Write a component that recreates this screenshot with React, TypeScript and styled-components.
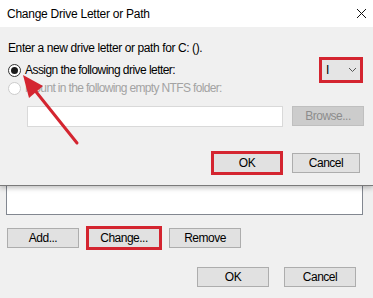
import React from "react";
import styled, { createGlobalStyle, css } from "styled-components";

const RED = "#d42530";

const GlobalStyle = createGlobalStyle`
  html, body {
    margin: 0;
    padding: 0;
    background: #f0f0f0;
  }
  body {
    font-family: "Liberation Sans", Arial, sans-serif;
    font-size: 12px;
    color: #000;
  }
`;

const Page = styled.div`
  position: relative;
  width: 373px;
  height: 298px;
  overflow: hidden;
  background: #f0f0f0;
`;

const Dialog = styled.div`
  position: relative;
  z-index: 1;
  background: #f0f0f0;
  border-bottom: 1px solid #7a7a7a;
  box-shadow: 0 2px 5px rgba(0, 0, 0, 0.25);
`;

const TitleBar = styled.div`
  height: 27px;
  background: #fff;
  display: flex;
  align-items: center;
  justify-content: space-between;
  padding: 0 6px 0 7px;
`;

const Title = styled.span`
  font-size: 12px;
  letter-spacing: -0.25px;
`;

const DialogBody = styled.div`
  display: flex;
  flex-direction: column;
  padding: 13px 0 12px 8px;
`;

const Prompt = styled.div`
  line-height: 16px;
  letter-spacing: -0.4px;
`;

const OptionRow = styled.div`
  display: flex;
  align-items: center;
  justify-content: space-between;
  height: 16px;
  margin-top: 6px;
  padding-right: 12px;
`;

const RadioLabel = styled.label<{ $disabled?: boolean }>`
  display: flex;
  align-items: center;
  gap: 4px;
  height: 16px;
  letter-spacing: ${(p) => (p.$disabled ? "-0.65px" : "-0.55px")};
  color: ${(p) => (p.$disabled ? "#a3a3a3" : "#000")};
  margin-top: ${(p) => (p.$disabled ? "2px" : "0")};
`;

const Radio = styled.span<{ $checked?: boolean; $disabled?: boolean }>`
  width: 11px;
  height: 11px;
  border-radius: 50%;
  background: #fff;
  border: 1px solid ${(p) => (p.$disabled ? "#cccccc" : "#333")};
  display: flex;
  align-items: center;
  justify-content: center;
  flex-shrink: 0;
  &::after {
    content: "";
    display: ${(p) => (p.$checked ? "block" : "none")};
    width: 7px;
    height: 7px;
    border-radius: 50%;
    background: #1a1a1a;
  }
`;

const highlight = css`
  outline: 3px solid ${RED};
  outline-offset: -1px;
`;

const Combo = styled.div<{ $highlighted?: boolean }>`
  width: 40px;
  height: 22px;
  margin: -3px 0;
  box-sizing: border-box;
  background: #e5e5e5;
  border: 1px solid #adadad;
  display: flex;
  align-items: center;
  justify-content: space-between;
  padding: 0 3px 0 4px;
  ${(p) => p.$highlighted && highlight}
`;

const FolderRow = styled.div`
  display: flex;
  align-items: flex-start;
  gap: 9px;
  margin-top: 10px;
  padding-left: 19px;
`;

const PathInput = styled.div`
  width: 256px;
  height: 21px;
  box-sizing: border-box;
  background: #fff;
  border: 1px solid #d9d9d9;
`;

const Button = styled.button<{ $highlighted?: boolean; $width?: number }>`
  width: ${(p) => p.$width ?? 72}px;
  height: 20px;
  box-sizing: border-box;
  padding: 0;
  font-family: inherit;
  font-size: 12px;
  letter-spacing: -0.5px;
  color: #000;
  background: #e1e1e1;
  border: 1px solid #adadad;
  border-radius: 0;
  flex-shrink: 0;
  &:disabled {
    background: #cccccc;
    border-color: #bfbfbf;
    color: #8c8c8c;
  }
  ${(p) => p.$highlighted && highlight}
`;

const DialogActions = styled.div`
  display: flex;
  justify-content: flex-end;
  gap: 11px;
  margin-top: 26px;
  padding-right: 13px;
`;

const ListBox = styled.div`
  height: 28px;
  margin: 0 10px 0 6px;
  background: #fff;
  border: 1px solid #828790;
  border-top: none;
`;

const ButtonRow = styled.div`
  display: flex;
  gap: 9px;
  margin-top: 13px;
  padding-left: 7px;
`;

const Actions = styled.div`
  display: flex;
  justify-content: flex-end;
  gap: 15px;
  margin-top: 19px;
  padding-right: 17px;
`;

const Overlay = styled.svg`
  position: absolute;
  left: 0;
  top: 0;
  z-index: 2;
  pointer-events: none;
`;

function CloseIcon() {
  return (
    <svg width="11" height="11" viewBox="0 0 11 11">
      <path d="M1 1 L10 10 M10 1 L1 10" stroke="#111" strokeWidth="1" fill="none" />
    </svg>
  );
}

function Chevron() {
  return (
    <svg width="9" height="6" viewBox="0 0 9 6">
      <path d="M1 1 L4.5 4.5 L8 1" stroke="#555" strokeWidth="1" fill="none" />
    </svg>
  );
}

export default function App() {
  return (
    <Page>
      <GlobalStyle />
      <Dialog>
        <TitleBar>
          <Title>Change Drive Letter or Path</Title>
          <CloseIcon />
        </TitleBar>
        <DialogBody>
          <Prompt>Enter a new drive letter or path for C: ().</Prompt>
          <OptionRow>
            <RadioLabel>
              <Radio $checked />
              Assign the following drive letter:
            </RadioLabel>
            <Combo $highlighted>
              <span>I</span>
              <Chevron />
            </Combo>
          </OptionRow>
          <RadioLabel $disabled>
            <Radio $disabled />
            Mount in the following empty NTFS folder:
          </RadioLabel>
          <FolderRow>
            <PathInput />
            <Button disabled>Browse...</Button>
          </FolderRow>
          <DialogActions>
            <Button $highlighted $width={68}>OK</Button>
            <Button $width={68}>Cancel</Button>
          </DialogActions>
        </DialogBody>
      </Dialog>
      <ListBox />
      <ButtonRow>
        <Button>Add...</Button>
        <Button $highlighted>Change...</Button>
        <Button>Remove</Button>
      </ButtonRow>
      <Actions>
        <Button>OK</Button>
        <Button>Cancel</Button>
      </Actions>
      <Overlay width="373" height="298">
        <line x1="77" y1="143" x2="33" y2="88" stroke={RED} strokeWidth="3" strokeLinecap="round" />
        <polygon points="23,75 43,86 29,98" fill={RED} />
      </Overlay>
    </Page>
  );
}
